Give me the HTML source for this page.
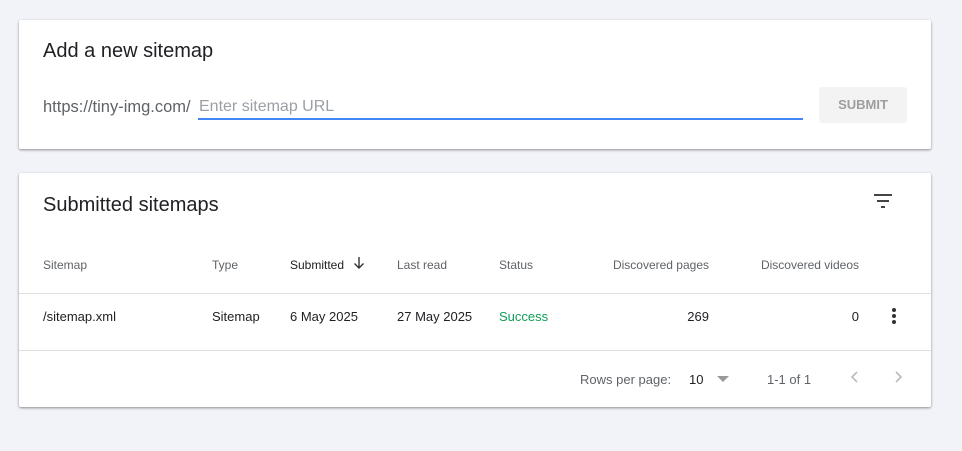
<!DOCTYPE html>
<html><head><style>
body{margin:0;background:#f1f3f8;font-family:"Liberation Sans",Arial,sans-serif;width:962px;height:451px;position:relative;overflow:hidden}
.card{position:absolute;left:19px;width:912px;background:#fff;border-radius:2px;box-shadow:0 1px 2px rgba(0,0,0,.3),0 1px 3px rgba(0,0,0,.15)}
.t{position:absolute;white-space:nowrap}
.h{font-size:12px;color:#5f6368}
.c{font-size:13px;color:#202124}
</style></head><body>
<div class="card" style="top:20px;height:129px">
 <div class="t" style="left:24px;top:20px;font-size:20px;color:#202124">Add a new sitemap</div>
 <div class="t" style="left:24px;top:78px;font-size:16.5px;color:#5f6368">https://tiny-img.com/</div>
 <div class="t" style="left:180px;top:78px;font-size:16px;color:#9aa0a6">Enter sitemap URL</div>
 <div style="position:absolute;left:179px;top:98px;width:605px;height:2px;background:#4285f4"></div>
 <div style="position:absolute;left:800px;top:67px;width:88px;height:36px;background:#f3f3f3;border-radius:3px;color:#9e9e9e;font-size:13px;font-weight:600;line-height:36px;text-align:center">SUBMIT</div>
</div>
<div class="card" style="top:173px;height:234px">
 <div class="t" style="left:24px;top:21px;font-size:20px;color:#202124">Submitted sitemaps</div>
 <svg style="position:absolute;left:855px;top:21px" width="18" height="14"><path d="M0 1h18M3 7h12M7 13h4" stroke="#444" stroke-width="2"/></svg>
 <div class="t h" style="left:24px;top:85px">Sitemap</div>
 <div class="t h" style="left:193px;top:85px">Type</div>
 <div class="t" style="left:271px;top:85px;font-size:12px;color:#202124">Submitted</div>
 <svg style="position:absolute;left:334px;top:83px" width="12" height="14"><path d="M6 1v11M1.5 7.5L6 12l4.5-4.5" stroke="#333" stroke-width="1.4" fill="none"/></svg>
 <div class="t h" style="left:378px;top:85px">Last read</div>
 <div class="t h" style="left:480px;top:85px">Status</div>
 <div class="t h" style="right:222px;top:85px">Discovered pages</div>
 <div class="t h" style="right:72px;top:85px">Discovered videos</div>
 <div style="position:absolute;left:0;right:0;top:120px;height:1px;background:#e0e0e0"></div>
 <div class="t c" style="left:24px;top:136px">/sitemap.xml</div>
 <div class="t c" style="left:193px;top:136px">Sitemap</div>
 <div class="t c" style="left:271px;top:136px">6 May 2025</div>
 <div class="t c" style="left:378px;top:136px">27 May 2025</div>
 <div class="t c" style="left:480px;top:136px;color:#0f9d58">Success</div>
 <div class="t c" style="right:222px;top:136px">269</div>
 <div class="t c" style="right:72px;top:136px">0</div>
 <svg style="position:absolute;left:872px;top:134px" width="6" height="18"><circle cx="3" cy="3" r="2" fill="#333"/><circle cx="3" cy="9" r="2" fill="#333"/><circle cx="3" cy="15" r="2" fill="#333"/></svg>
 <div style="position:absolute;left:0;right:0;top:177px;height:1px;background:#e0e0e0"></div>
 <div class="t h" style="left:561px;top:199px;font-size:13px">Rows per page:</div>
 <div class="t c" style="left:670px;top:199px">10</div>
 <svg style="position:absolute;left:698px;top:203px" width="12" height="6"><path d="M0 0h12L6 6z" fill="#999"/></svg>
 <div class="t h" style="left:748px;top:199px;font-size:13px">1-1 of 1</div>
 <svg style="position:absolute;left:831px;top:198px" width="8" height="12"><path d="M7 1L2 6l5 5" stroke="#bbb" stroke-width="1.6" fill="none"/></svg>
 <svg style="position:absolute;left:876px;top:198px" width="8" height="12"><path d="M1 1l5 5-5 5" stroke="#bbb" stroke-width="1.6" fill="none"/></svg>
</div>
</body></html>
